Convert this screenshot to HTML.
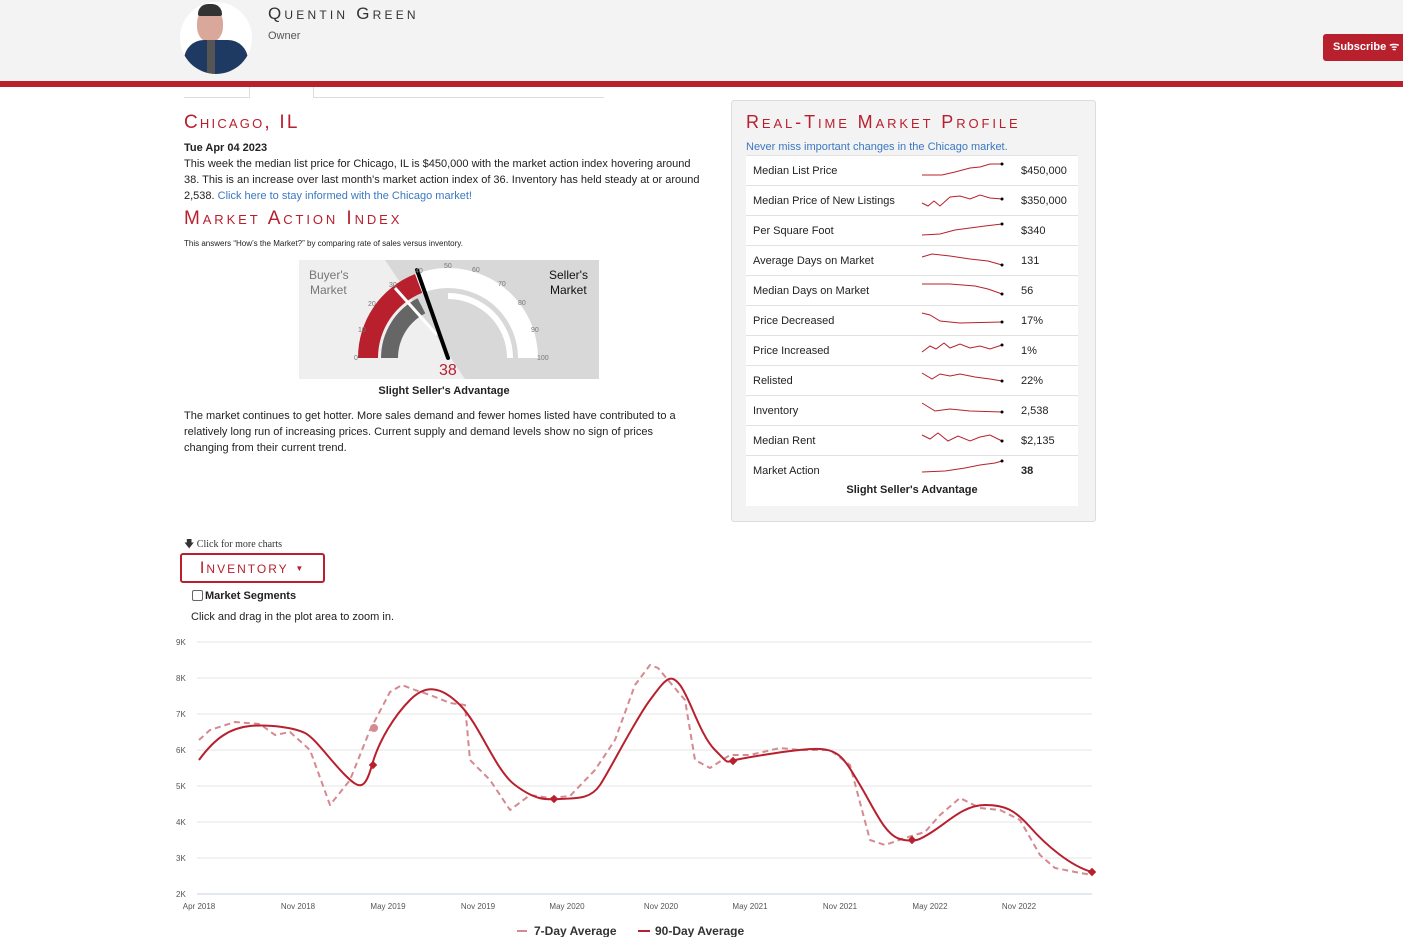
<!DOCTYPE html>
<html><head><meta charset="utf-8"><style>
body{margin:0;width:1403px;height:937px;overflow:hidden;background:#fff;font-family:"Liberation Sans",sans-serif;color:#222;position:relative}
.abs{position:absolute}
.sc{font-variant:small-caps;letter-spacing:1px;font-family:"Liberation Sans",sans-serif}
.h{color:#b8202e;font-size:19px;font-variant:small-caps;letter-spacing:2.4px;font-weight:normal;margin:0}
p{margin:0}
a{color:#3a78c2;text-decoration:none}
table{border-collapse:collapse}
td{font-size:11px;height:29px;border-top:1px solid #e2e2e2;padding:0}
</style></head><body>
<div class="abs" style="left:0;top:0;width:1403px;height:81px;background:#f3f3f3"></div>
<div class="abs" style="left:0;top:81px;width:1403px;height:6px;background:#b8202e"></div>
<div class="abs" style="left:180px;top:2px;width:72px;height:72px;border-radius:50%;background:#fff;overflow:hidden">
<div class="abs" style="left:17px;top:6px;width:26px;height:34px;border-radius:45%;background:#d9a89a"></div>
<div class="abs" style="left:18px;top:2px;width:24px;height:12px;border-radius:10px 10px 2px 2px;background:#333"></div>
<div class="abs" style="left:4px;top:38px;width:64px;height:40px;border-radius:20px 20px 0 0;background:#1e3a63"></div>
<div class="abs" style="left:27px;top:38px;width:8px;height:34px;background:#555"></div></div>
<div class="abs sc" style="left:268px;top:4px;font-size:17px;color:#333;letter-spacing:3.2px">Quentin Green</div>
<div class="abs" style="left:268px;top:30px;font-size:11px;color:#555">Owner</div>
<div class="abs" style="left:1323px;top:34px;width:80px;height:27px;background:#b8202e;border-radius:3px 0 0 3px;color:#fff;font-size:11px;font-weight:bold;line-height:27px;text-indent:10px">Subscribe ᯤ</div>
<div class="abs" style="left:184px;top:97px;width:420px;height:1px;background:#ddd"></div>
<div class="abs" style="left:249px;top:87px;width:1px;height:11px;background:#ddd"></div>
<div class="abs" style="left:313px;top:87px;width:1px;height:11px;background:#ddd"></div>
<div class="abs" style="left:250px;top:87px;width:63px;height:11px;background:#fff"></div>

<h2 class="abs h" style="left:184px;top:112px;letter-spacing:2.2px">Chicago, IL</h2>
<div class="abs" style="left:184px;top:140px;width:522px;font-size:11px;line-height:16px">
<b>Tue Apr 04 2023</b><br>This week the median list price for Chicago, IL is $450,000 with the market action index hovering around 38. This is an increase over last month's market action index of 36. Inventory has held steady at or around 2,538. <a>Click here to stay informed with the Chicago market!</a></div>
<h2 class="abs h" style="left:184px;top:208px;letter-spacing:2.9px">Market Action Index</h2>
<div class="abs" style="left:184px;top:239px;font-size:8px">This answers “How’s the Market?” by comparing rate of sales versus inventory.</div>

<svg class="abs" style="left:299px;top:260px" width="300" height="119" viewBox="299 260 300 119">
<rect x="299" y="260" width="300" height="119" fill="#efefef"/>
<polygon points="385,260 599,260 599,379 465,379" fill="#d8d8d8"/>
<path d="M358,358 A90,90 0 0 1 538,358 L518,358 A70,70 0 0 0 378,358Z" fill="#fff"/>
<path d="M358,358 A90,90 0 0 1 415,274 L422.2,292.9 A70,70 0 0 0 378,358Z" fill="#b8202e"/>
<path d="M381,358 A67,67 0 0 1 417.6,298.3 L425.3,313.4 A50,50 0 0 0 398,358Z" fill="#666"/>
<path d="M448,293 A65,65 0 0 1 513,358 L507,358 A59,59 0 0 0 448,299Z" fill="#fff"/>
<line x1="395" y1="288" x2="437" y2="335" stroke="#fff" stroke-width="3"/>
<line x1="448" y1="358" x2="417" y2="270" stroke="#000" stroke-width="4" stroke-linecap="round"/>
<g font-size="7" fill="#777" font-family="Liberation Sans">
<text x="354" y="360">0</text><text x="358" y="332">10</text><text x="368" y="306">20</text><text x="389" y="287">30</text><text x="415" y="273">40</text><text x="444" y="268">50</text><text x="472" y="272">60</text><text x="498" y="286">70</text><text x="518" y="305">80</text><text x="531" y="332">90</text><text x="537" y="360">100</text></g>
<text x="309" y="279" font-size="12" fill="#777">Buyer's</text><text x="310" y="294" font-size="12" fill="#777">Market</text>
<text x="549" y="279" font-size="12" fill="#111">Seller's</text><text x="550" y="294" font-size="12" fill="#111">Market</text>
<text x="439" y="375" font-size="16" fill="#b8202e">38</text>
</svg>
<div class="abs" style="left:299px;top:385px;width:290px;text-align:center;font-size:11px;font-weight:bold">Slight Seller's Advantage</div>
<div class="abs" style="left:184px;top:408px;width:512px;font-size:11px;line-height:16px">The market continues to get hotter. More sales demand and fewer homes listed have contributed to a relatively long run of increasing prices. Current supply and demand levels show no sign of prices changing from their current trend.</div>

<div class="abs" style="left:731px;top:100px;width:363px;height:420px;background:#f3f3f3;border:1px solid #ddd;border-radius:3px"></div>
<h2 class="abs h" style="left:746px;top:112px;font-size:18px;letter-spacing:2.9px">Real-Time Market Profile</h2>
<div class="abs" style="left:746px;top:141px;font-size:11px;color:#3a78c2">Never miss important changes in the Chicago market.</div>
<div class="abs" style="left:746px;top:155px;width:332px;height:351px;background:#fff"></div>
<table class="abs" style="left:746px;top:155px;width:332px">
<tr><td style="padding-left:7px;width:268px">Median List Price</td><td>$450,000</td></tr>
<tr><td style="padding-left:7px">Median Price of New Listings</td><td>$350,000</td></tr>
<tr><td style="padding-left:7px">Per Square Foot</td><td>$340</td></tr>
<tr><td style="padding-left:7px">Average Days on Market</td><td>131</td></tr>
<tr><td style="padding-left:7px">Median Days on Market</td><td>56</td></tr>
<tr><td style="padding-left:7px">Price Decreased</td><td>17%</td></tr>
<tr><td style="padding-left:7px">Price Increased</td><td>1%</td></tr>
<tr><td style="padding-left:7px">Relisted</td><td>22%</td></tr>
<tr><td style="padding-left:7px">Inventory</td><td>2,538</td></tr>
<tr><td style="padding-left:7px">Median Rent</td><td>$2,135</td></tr>
<tr><td style="padding-left:7px">Market Action</td><td><b>38</b></td></tr>
</table>
<div class="abs" style="left:746px;top:484px;width:332px;text-align:center;font-size:11px;font-weight:bold">Slight Seller's Advantage</div>
<svg class="abs" style="left:920px;top:155px" width="90" height="330" fill="none" stroke="#b8202e" stroke-width="1">
<polyline points="2,20 22,20 35,17 50,13 60,12 70,9 82,9"/><circle cx="82" cy="9" r="1.5" fill="#000" stroke="none"/>
<polyline points="2,48 8,51 14,46 20,51 30,42 40,41 50,44 60,40 70,43 82,44"/><circle cx="82" cy="44" r="1.5" fill="#000" stroke="none"/>
<polyline points="2,80 20,79 35,75 50,73 65,71 82,69"/><circle cx="82" cy="69" r="1.5" fill="#000" stroke="none"/>
<polyline points="2,102 12,99 30,101 50,104 68,106 82,110"/><circle cx="82" cy="110" r="1.5" fill="#000" stroke="none"/>
<polyline points="2,129 30,129 55,131 68,134 82,139"/><circle cx="82" cy="139" r="1.5" fill="#000" stroke="none"/>
<polyline points="2,158 10,160 20,166 40,168 82,167"/><circle cx="82" cy="167" r="1.5" fill="#000" stroke="none"/>
<polyline points="2,197 10,191 16,194 24,188 30,193 40,189 50,193 60,191 70,194 82,190"/><circle cx="82" cy="190" r="1.5" fill="#000" stroke="none"/>
<polyline points="2,218 12,224 20,219 30,221 40,219 55,222 70,224 82,226"/><circle cx="82" cy="226" r="1.5" fill="#000" stroke="none"/>
<polyline points="2,248 15,256 30,254 50,256 82,257"/><circle cx="82" cy="257" r="1.5" fill="#000" stroke="none"/>
<polyline points="2,280 10,284 18,278 28,286 38,281 50,286 60,282 70,280 82,286"/><circle cx="82" cy="286" r="1.5" fill="#000" stroke="none"/>
<polyline points="2,317 25,316 45,313 60,310 75,308 82,306"/><circle cx="82" cy="306" r="1.5" fill="#000" stroke="none"/>
</svg>

<div class="abs" style="left:184px;top:537px;font-size:10px;font-family:'Liberation Serif',serif;color:#333">🡇 Click for more charts</div>
<div class="abs sc" style="left:180px;top:553px;width:141px;height:26px;border:2px solid #b8202e;border-radius:3px;color:#b8202e;font-size:17px;line-height:26px;text-align:center;letter-spacing:2px">Inventory <span style="font-size:8px;vertical-align:2px">▼</span></div>
<div class="abs" style="left:192px;top:590px;width:9px;height:9px;border:1px solid #666;border-radius:2px"></div>
<div class="abs" style="left:205px;top:590px;font-size:11px;font-weight:bold">Market Segments</div>
<div class="abs" style="left:191px;top:611px;font-size:11px">Click and drag in the plot area to zoom in.</div>

<svg class="abs" style="left:0;top:630px" width="1403" height="307" viewBox="0 630 1403 307">
<g stroke="#e6e6e6"><line x1="197" y1="642" x2="1092" y2="642"/><line x1="197" y1="678" x2="1092" y2="678"/><line x1="197" y1="714" x2="1092" y2="714"/><line x1="197" y1="750" x2="1092" y2="750"/><line x1="197" y1="786" x2="1092" y2="786"/><line x1="197" y1="822" x2="1092" y2="822"/><line x1="197" y1="858" x2="1092" y2="858"/></g>
<line x1="197" y1="894" x2="1092" y2="894" stroke="#c8d0e0"/>
<g font-size="8" fill="#555"><text x="176" y="645">9K</text><text x="176" y="681">8K</text><text x="176" y="717">7K</text><text x="176" y="753">6K</text><text x="176" y="789">5K</text><text x="176" y="825">4K</text><text x="176" y="861">3K</text><text x="176" y="897">2K</text>
<g text-anchor="middle"><text x="199" y="909">Apr 2018</text><text x="298" y="909">Nov 2018</text><text x="388" y="909">May 2019</text><text x="478" y="909">Nov 2019</text><text x="567" y="909">May 2020</text><text x="661" y="909">Nov 2020</text><text x="750" y="909">May 2021</text><text x="840" y="909">Nov 2021</text><text x="930" y="909">May 2022</text><text x="1019" y="909">Nov 2022</text></g></g>
<polyline fill="none" stroke="#d48a90" stroke-width="2" stroke-dasharray="6,4" stroke-linejoin="round" points="199,740 210,730 235,722 260,724 275,735 290,732 310,750 330,805 350,780 370,730 390,692 402,685 415,690 430,695 450,703 465,705 470,760 490,780 510,810 530,795 550,798 570,796 595,770 615,740 635,685 650,665 658,668 668,680 685,700 695,760 710,768 730,755 750,755 780,748 800,750 830,750 850,765 870,840 885,845 905,838 925,832 940,815 960,798 980,808 1000,810 1020,820 1040,855 1055,868 1075,872 1092,875"/>
<path fill="none" stroke="#b8202e" stroke-width="2" d="M199,760 C215,738 230,728 250,726 S295,728 305,733 S330,760 345,775 S365,790 372,765 S395,715 410,700 S440,685 460,705 S495,770 515,785 S545,800 560,799 S590,800 600,785 S635,720 650,700 S670,672 680,685 S700,735 715,750 S725,762 735,760 S800,748 820,749 S845,760 860,785 S885,835 900,839 S920,840 935,830 S965,805 985,805 S1015,810 1030,827 S1070,866 1092,872"/>
<circle cx="374" cy="728" r="4" fill="#d48a90"/>
<g fill="#b8202e"><rect x="370" y="762" width="6" height="6" transform="rotate(45 373 765)"/><rect x="551" y="796" width="6" height="6" transform="rotate(45 554 799)"/><rect x="730" y="758" width="6" height="6" transform="rotate(45 733 761)"/><rect x="909" y="837" width="6" height="6" transform="rotate(45 912 840)"/><rect x="1089" y="869" width="6" height="6" transform="rotate(45 1092 872)"/></g>
<line x1="517" y1="931" x2="527" y2="931" stroke="#d48a90" stroke-width="2"/><text x="534" y="935" font-size="12" font-weight="bold" fill="#333">7-Day Average</text>
<line x1="638" y1="931" x2="650" y2="931" stroke="#b8202e" stroke-width="2"/><text x="655" y="935" font-size="12" font-weight="bold" fill="#333">90-Day Average</text>
</svg>
</body></html>
